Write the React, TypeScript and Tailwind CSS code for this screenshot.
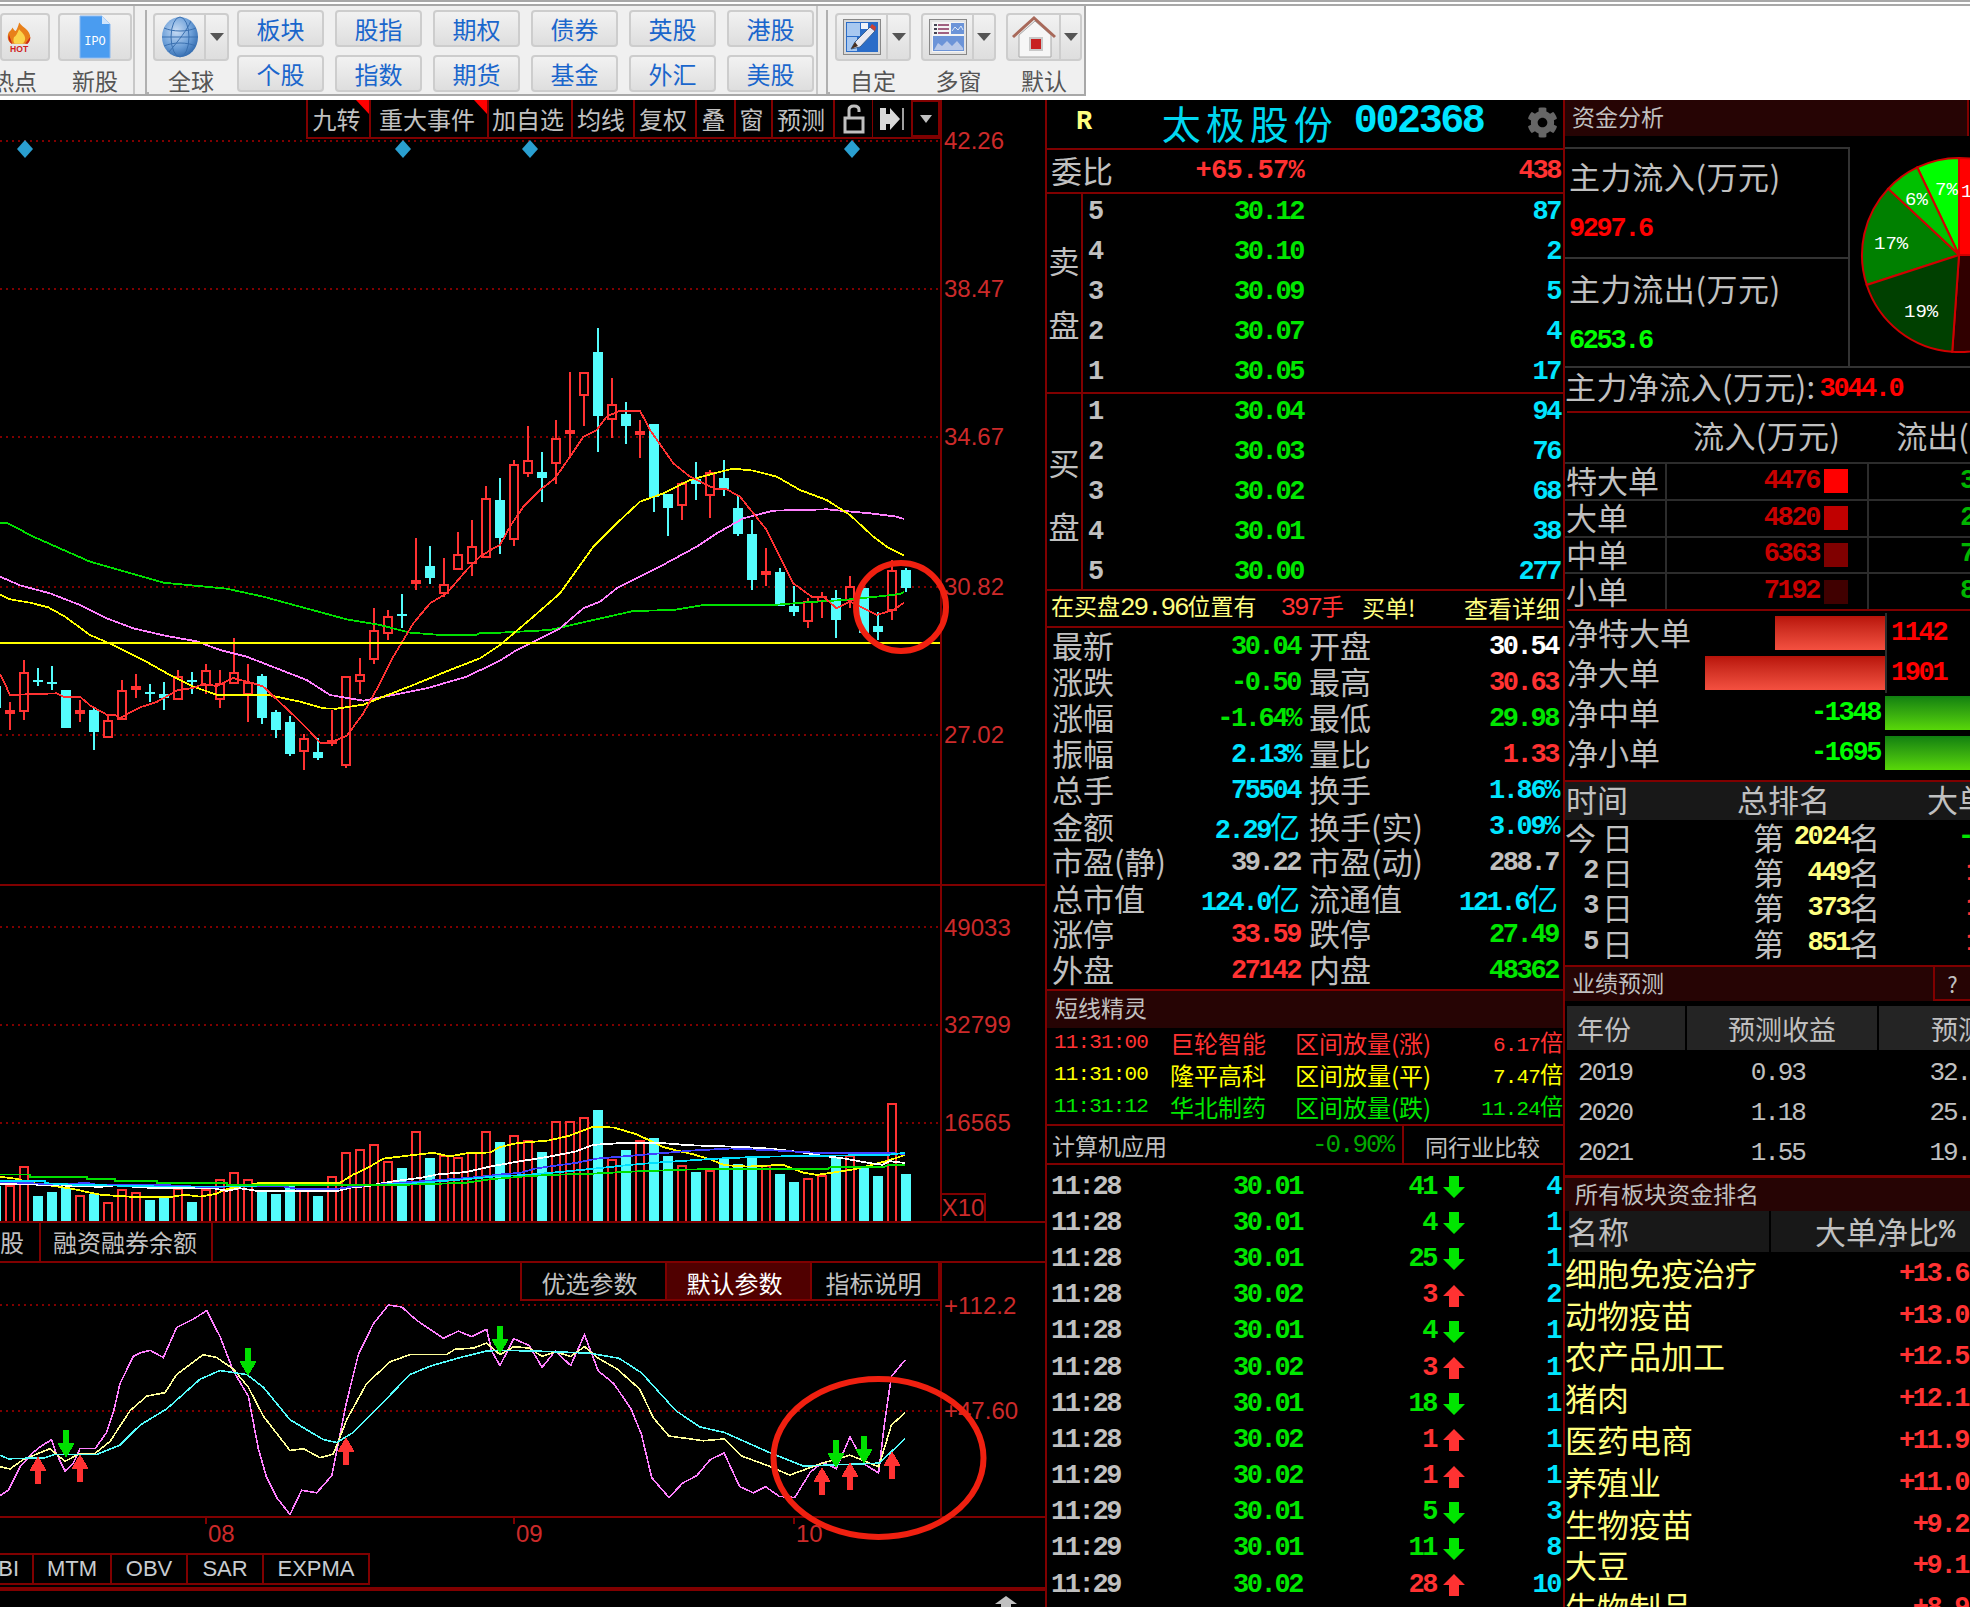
import React from 'react';
import { FaCog } from 'react-icons/fa';

const NUM = "[font-family:'Liberation_Mono','Noto_Sans_CJK_SC',monospace] font-bold text-[27px] tracking-[-2.4px] leading-none";
const THIN = "[font-family:'Liberation_Mono','Noto_Sans_CJK_SC',monospace] font-normal text-[26px] tracking-[-2.1px] leading-none";
const SMALL = "[font-family:'Liberation_Mono','Noto_Sans_CJK_SC',monospace] font-normal text-[21px] tracking-[-0.85px] leading-none";
const LABEL = "text-[31px] leading-none text-[#c0c0c0] whitespace-nowrap pb-[3px]";
const HEAD = "text-[23px] leading-none text-[#c0c0c0] whitespace-nowrap pb-[3px]";
const AXIS = "[font-family:'Liberation_Sans',sans-serif] text-[24px] leading-[24px] text-[#cc2a2a] whitespace-nowrap";

const G = 'text-[#00e600]';
const R = 'text-[#ff3232]';
const C = 'text-[#00e5ff]';
const W = 'text-[#c0c0c0]';
const Y = 'text-[#ffff80]';

type P = [number, number];
const z8 = (p: P[]) => p.map(([x, y]) => `${x / 3},${300 + y / 3}`).join(' ');
const z9 = (p: P[]) => p.map(([x, y]) => `${500 + x / 3},${300 + y / 3}`).join(' ');
const z10 = (p: P[]) => p.map(([x, y]) => `${x / 3},${1040 + y / 2.765}`).join(' ');
const z11 = (p: P[]) => p.map(([x, y]) => `${500 + x / 2.9},${1040 + y / 2.765}`).join(' ');

type Candle = ['r' | 'c', number, number, number, number];
const candles: Candle[] = [
  ['c', 1158, 1224, 1158, 1224], ['r', 1207, 1290, 1234, 1238], ['r', 1080, 1260, 1118, 1234], ['c', 1104, 1158, 1140, 1146],
  ['c', 1098, 1170, 1146, 1152], ['c', 1170, 1284, 1170, 1284], ['r', 1200, 1266, 1234, 1238], ['c', 1224, 1350, 1230, 1296],
  ['r', 1244, 1312, 1262, 1312], ['r', 1140, 1258, 1172, 1256], ['r', 1122, 1194, 1162, 1166], ['c', 1152, 1206, 1176, 1182],
  ['c', 1146, 1230, 1182, 1194], ['r', 1110, 1198, 1130, 1198], ['c', 1116, 1182, 1140, 1146], ['r', 1092, 1182, 1112, 1156],
  ['r', 1110, 1224, 1152, 1198], ['r', 1014, 1150, 1118, 1150], ['r', 1092, 1266, 1148, 1182], ['c', 1122, 1272, 1128, 1254],
  ['c', 1230, 1314, 1236, 1290], ['c', 1248, 1368, 1266, 1362], ['r', 1302, 1410, 1316, 1354], ['c', 1314, 1380, 1356, 1374],
  ['r', 1230, 1338, 1324, 1328], ['r', 1130, 1404, 1130, 1396], ['r', 1074, 1182, 1124, 1144], ['r', 924, 1092, 992, 1078],
  ['r', 930, 1020, 950, 1000], ['c', 882, 984, 942, 948], ['r', 714, 870, 842, 850], ['c', 738, 852, 798, 834],
  ['r', 774, 892, 854, 880], ['r', 696, 808, 764, 808], ['r', 660, 828, 740, 790], ['r', 558, 772, 596, 772],
  ['c', 534, 762, 600, 714], ['r', 480, 738, 494, 718], ['r', 378, 532, 482, 520], ['c', 456, 606, 516, 534],
  ['r', 360, 552, 416, 490], ['r', 216, 468, 392, 400], ['r', 218, 378, 218, 286], ['c', 84, 456, 156, 348],
  ['r', 234, 414, 314, 356], ['c', 306, 432, 342, 378], ['r', 360, 474, 397, 401], ['c', 372, 636, 372, 590],
  ['c', 582, 708, 582, 624], ['r', 546, 660, 552, 616], ['c', 486, 600, 536, 552], ['r', 510, 654, 518, 584],
  ['c', 480, 588, 534, 566], ['c', 588, 708, 624, 702], ['c', 660, 870, 702, 840], ['r', 744, 858, 817, 821],
  ['c', 804, 918, 816, 918], ['c', 858, 948, 918, 936], ['r', 894, 984, 906, 964], ['r', 876, 954, 890, 902],
  ['c', 870, 1014, 894, 960], ['r', 828, 924, 860, 900], ['c', 864, 1008, 864, 1000], ['c', 936, 1020, 978, 996],
  ['r', 780, 960, 812, 930], ['c', 804, 876, 810, 864],
];

const vols: ['r' | 'c', number][] = [
  ['c', 405], ['r', 405], ['r', 350], ['c', 431], ['c', 420], ['c', 408], ['r', 432], ['c', 426], ['r', 450], ['r', 416], ['r', 422], ['c', 442],
  ['c', 435], ['r', 412], ['c', 448], ['r', 415], ['r', 388], ['r', 367], ['r', 388], ['c', 415], ['c', 426], ['c', 393], ['r', 415], ['c', 431],
  ['r', 378], ['r', 312], ['r', 305], ['r', 289], ['r', 338], ['c', 354], ['r', 255], ['c', 326], ['r', 322], ['r', 327], ['r', 312], ['r', 255],
  ['c', 282], ['r', 266], ['r', 278], ['c', 310], ['r', 228], ['r', 228], ['r', 217], ['c', 194], ['r', 333], ['c', 304], ['r', 278], ['c', 271],
  ['c', 321], ['r', 349], ['c', 365], ['r', 361], ['c', 327], ['c', 344], ['c', 327], ['r', 349], ['c', 371], ['c', 393], ['r', 383], ['r', 376],
  ['c', 327], ['r', 321], ['c', 349], ['c', 376], ['r', 178], ['c', 371],
];

const ma5 = z8([[0, 1122], [30, 1184], [50, 1184], [170, 1180], [190, 1190], [240, 1190], [270, 1216], [320, 1244], [345, 1244], [360, 1254], [420, 1222], [470, 1206], [534, 1170], [580, 1164], [610, 1152], [650, 1158], [700, 1134], [760, 1150], [790, 1160], [830, 1198], [880, 1245], [930, 1295], [960, 1328], [990, 1328], [1040, 1308], [1090, 1240], [1140, 1150], [1180, 1070], [1240, 970], [1290, 910], [1340, 880], [1400, 810], [1440, 770], [1480, 745]]) + ' ' + z9([[0, 735], [30, 680], [70, 620], [120, 570], [165, 535], [210, 470], [250, 410], [290, 390], [320, 350], [360, 332], [420, 332], [450, 390], [520, 490], [570, 530], [610, 550], [650, 568], [680, 568], [720, 590], [760, 640], [800, 690], [850, 790], [880, 850], [935, 890], [970, 890], [1010, 925], [1050, 905], [1090, 925], [1130, 945], [1180, 930], [1212, 908]]);
const ma10 = z8([[0, 884], [30, 898], [90, 908], [145, 922], [195, 950], [270, 1005], [340, 1035], [430, 1080], [510, 1125], [580, 1160], [650, 1184], [800, 1184], [900, 1205], [970, 1225], [1010, 1226], [1090, 1214], [1150, 1190], [1240, 1155], [1350, 1110], [1440, 1075]]) + ' ' + z9([[0, 1035], [100, 950], [180, 880], [280, 740], [350, 670], [420, 605], [490, 580], [570, 540], [650, 518], [700, 506], [760, 512], [830, 530], [900, 570], [980, 600], [1050, 645], [1120, 710], [1160, 740], [1212, 766]]);
const ma20 = z8([[0, 830], [60, 856], [150, 880], [240, 915], [320, 955], [400, 985], [500, 1008], [590, 1024], [660, 1050], [740, 1070], [830, 1105], [920, 1140], [990, 1185], [1090, 1202], [1180, 1185], [1280, 1165], [1400, 1130]]) + ' ' + z9([[0, 1082], [50, 1050], [120, 1015], [180, 985], [250, 925], [300, 905], [350, 865], [470, 805], [590, 740], [650, 700], [730, 655], [820, 632], [980, 628], [1110, 640], [1190, 650], [1212, 657]]);
const ma60 = z8([[0, 668], [20, 668], [100, 710], [270, 785], [400, 822], [490, 848], [680, 866], [790, 890], [900, 920], [1040, 958], [1140, 975], [1230, 998], [1310, 1004], [1430, 1004], [1440, 998]]) + ' ' + z9([[0, 998], [150, 990], [280, 960], [400, 933], [520, 930], [610, 915], [820, 915], [905, 908], [1030, 900], [1130, 890], [1200, 882], [1212, 876]]);

const volLines: [string, string][] = [
  ['#ffff00', z10([[0, 378], [50, 384], [94, 395], [178, 406], [220, 412], [270, 422], [303, 428], [386, 433], [510, 434], [555, 428], [600, 433], [650, 425], [680, 412], [775, 396], [1020, 395], [1060, 372], [1100, 355], [1150, 328], [1240, 318], [1300, 312], [1350, 322], [1400, 313], [1470, 311]]) + ' ' + z11([[0, 296], [50, 285], [140, 278], [200, 265], [270, 240], [330, 242], [400, 262], [470, 295], [510, 305], [560, 316], [610, 330], [650, 346], [720, 350], [820, 345], [880, 367], [920, 373], [990, 363], [1030, 357], [1120, 335], [1175, 318]])],
  ['#ffffff', z10([[0, 398], [50, 398], [303, 406], [345, 402], [470, 410], [640, 410], [680, 417], [720, 410], [770, 417], [1015, 417], [1060, 406], [1100, 405], [1145, 396], [1185, 390], [1270, 380], [1310, 372], [1400, 365], [1470, 350]]) + ' ' + z11([[0, 345], [60, 335], [140, 323], [220, 308], [270, 290], [350, 285], [470, 285], [550, 291], [710, 296], [790, 301], [870, 310], [920, 318], [1000, 328], [1070, 340], [1110, 345], [1130, 335], [1175, 340]])],
  ['#4040ff', z10([[0, 392], [180, 400], [260, 395], [300, 402], [470, 400], [640, 408], [680, 405], [850, 405], [890, 411], [1015, 411], [1060, 405], [1270, 390], [1395, 382], [1440, 378]]) + ' ' + z11([[0, 372], [60, 367], [100, 356], [140, 350], [220, 340], [280, 328], [380, 320], [470, 313], [550, 306], [670, 300], [790, 305], [920, 312], [1120, 312], [1175, 315]])],
  ['#00e0ff', z10([[0, 390], [135, 390], [135, 396], [220, 400], [470, 405], [640, 405], [700, 405], [850, 400], [1015, 400], [1140, 400], [1230, 397], [1395, 385]]) + ' ' + z11([[0, 376], [60, 374], [140, 368], [260, 357], [380, 345], [470, 338], [550, 333], [630, 328], [750, 323], [920, 320], [1120, 318], [1175, 312]])],
  ['#00e000', z10([[0, 372], [90, 372], [90, 378], [260, 378], [260, 384], [345, 384], [345, 389], [470, 389], [470, 395], [680, 395], [680, 400], [850, 400], [1225, 400], [1395, 395], [1480, 384]]) + ' ' + z11([[0, 383], [60, 378], [140, 373], [260, 370], [380, 364], [550, 358], [790, 356], [950, 357], [960, 351], [1115, 351], [1125, 345], [1175, 345]])],
];

const kdjK = z10([[0, 1260], [25, 1245], [60, 1180], [100, 1140], [125, 1122], [155, 1105], [165, 1135], [195, 1192], [220, 1170], [240, 1130], [285, 1130], [320, 1085], [340, 1030], [360, 950], [400, 875], [420, 865], [450, 858], [490, 878], [530, 795], [580, 772], [620, 748], [660, 820], [700, 915], [745, 985], [775, 1130], [800, 1210], [830, 1265], [870, 1312], [905, 1245], [950, 1252], [995, 1205], [1020, 1090], [1040, 1000], [1075, 870], [1120, 785], [1165, 733], [1205, 738], [1250, 775], [1330, 825], [1375, 805], [1415, 820], [1460, 800], [1475, 860]]) + ' ' + z11([[0, 900], [40, 826], [85, 845], [122, 905], [160, 860], [205, 900], [245, 815], [285, 915], [330, 950], [380, 1020], [410, 1090], [440, 1210], [490, 1265], [530, 1225], [570, 1205], [610, 1160], [650, 1142], [695, 1235], [735, 1252], [770, 1235], [810, 1262], [855, 1265], [900, 1195], [935, 1168], [975, 1185], [1015, 1098], [1060, 1175], [1098, 1197], [1115, 1060], [1135, 930], [1175, 885]]);
const kdjD = z10([[0, 1180], [30, 1186], [70, 1160], [150, 1130], [195, 1165], [240, 1143], [285, 1143], [330, 1110], [390, 1025], [440, 985], [495, 975], [530, 925], [610, 870], [650, 878], [700, 910], [745, 960], [790, 1040], [870, 1135], [910, 1130], [960, 1155], [1000, 1145], [1040, 1050], [1100, 950], [1170, 890], [1230, 870], [1340, 870], [1365, 855], [1420, 852], [1460, 838]]) + ' ' + z11([[0, 870], [40, 848], [85, 852], [122, 875], [160, 862], [205, 875], [245, 848], [285, 880], [340, 910], [405, 965], [445, 1045], [490, 1095], [590, 1108], [650, 1103], [700, 1150], [780, 1178], [840, 1203], [935, 1170], [1015, 1148], [1060, 1165], [1098, 1180], [1135, 1065], [1175, 1030]]);
const kdjJ = z10([[0, 1148], [25, 1158], [135, 1155], [165, 1146], [290, 1146], [360, 1120], [420, 1065], [500, 1020], [600, 938], [660, 914], [740, 925], [790, 960], [870, 1050], [970, 1105], [1010, 1113], [1060, 1085], [1130, 1020], [1230, 925], [1290, 902], [1380, 878], [1460, 860]]) + ' ' + z11([[0, 858], [100, 860], [160, 862], [260, 866], [345, 880], [410, 920], [510, 1025], [580, 1070], [650, 1085], [780, 1140], [880, 1178], [1100, 1170], [1175, 1102]]);

function sector(cx: number, cy: number, r: number, a0: number, a1: number) {
  const pt = (a: number) => [cx + r * Math.sin((a * Math.PI) / 180), cy - r * Math.cos((a * Math.PI) / 180)];
  const [x0, y0] = pt(a0);
  const [x1, y1] = pt(a1);
  return `M${cx},${cy} L${x0},${y0} A${r},${r} 0 ${Math.abs(a1 - a0) > 180 ? 1 : 0} ${a1 > a0 ? 1 : 0} ${x1},${y1} Z`;
}

function UpArrow({ cx, top, h = 28, w = 18 }: { cx: number; top: number; h?: number; w?: number }) {
  const head = h * 0.55;
  const s = w * 0.37;
  return <polygon fill="#ff3232" shapeRendering="crispEdges" points={`${cx},${top} ${cx + w / 2},${top + head} ${cx + s / 2},${top + head} ${cx + s / 2},${top + h} ${cx - s / 2},${top + h} ${cx - s / 2},${top + head} ${cx - w / 2},${top + head}`} />;
}
function DownArrow({ cx, top, h = 28, w = 18 }: { cx: number; top: number; h?: number; w?: number }) {
  const b = top + h;
  const head = h * 0.55;
  const s = w * 0.37;
  return <polygon fill="#00e000" shapeRendering="crispEdges" points={`${cx},${b} ${cx + w / 2},${b - head} ${cx + s / 2},${b - head} ${cx + s / 2},${top} ${cx - s / 2},${top} ${cx - s / 2},${b - head} ${cx - w / 2},${b - head}`} />;
}

function Flame() {
  return (
    <svg width="42" height="38" viewBox="0 0 42 38">
      <path d="M20 2 C24 8 33 10 33 20 C33 24 31 26 29 27 L12 27 C8 25 6 22 7 16 C8 12 11 12 12 8 C14 11 15 12 16 12 C18 9 19 6 20 2 Z" fill="#e8801a" />
      <path d="M20 10 C23 14 27 16 27 21 C27 24 25 26 24 27 L15 27 C13 25 13 22 14 19 C16 19 18 14 20 10 Z" fill="#fbd34a" />
      <path d="M11 27 C8 24 7 20 8 16 L12 27 Z M30 27 C32 24 33 22 33 19 L27 27 Z" fill="#c8261a" />
      <text x="20" y="37" textAnchor="middle" fontFamily="Liberation Sans" fontWeight="700" fontSize="10" fill="#d02020">HOT</text>
    </svg>
  );
}
function Doc() {
  return (
    <svg width="34" height="44" viewBox="0 0 34 44">
      <path d="M2 1 H24 L32 9 V43 H2 Z" fill="#4a9cf0" stroke="#8ab8f0" />
      <path d="M24 1 V9 H32 Z" fill="#cfe4fb" />
      <text x="17" y="30" textAnchor="middle" fontFamily="Liberation Mono" fontSize="12" fill="#ffffff">IPO</text>
    </svg>
  );
}
function Globe() {
  return (
    <svg width="38" height="42" viewBox="0 0 38 42">
      <defs>
        <radialGradient id="gl" cx="40%" cy="35%" r="70%">
          <stop offset="0%" stopColor="#c8dcf4" />
          <stop offset="60%" stopColor="#6c9fd8" />
          <stop offset="100%" stopColor="#2f68ac" />
        </radialGradient>
      </defs>
      <ellipse cx="19" cy="21" rx="18" ry="20" fill="url(#gl)" />
      <g fill="none" stroke="#3a70b0" strokeWidth="1">
        <ellipse cx="19" cy="21" rx="9" ry="20" />
        <path d="M3 12 C12 16 26 16 35 12 M1 21 H37 M3 30 C12 26 26 26 35 30 M8 36 C18 24 26 14 30 5" />
      </g>
    </svg>
  );
}
function PencilIcon() {
  return (
    <svg width="38" height="36" viewBox="0 0 38 36">
      <rect x="0.5" y="0.5" width="37" height="35" fill="#d8d8d8" stroke="#888" />
      <rect x="3" y="3" width="32" height="30" fill="#2a6cc8" />
      <rect x="4" y="4" width="13" height="13" fill="#a8c8f0" />
      <rect x="18" y="4" width="7" height="6" fill="#f0f4fa" />
      <rect x="4" y="18" width="10" height="14" fill="#a8c8f0" />
      <path d="M8 30 L12 23 L27 8 L32 12 L17 28 Z" fill="#e8e8f0" stroke="#3a6090" />
      <path d="M27 8 L32 12 L33 8 L29 5 Z" fill="#d04030" />
      <path d="M8 30 L12 23 L15 27 Z" fill="#4a3020" />
    </svg>
  );
}
function WindowsIcon() {
  return (
    <svg width="38" height="36" viewBox="0 0 38 36">
      <rect x="0.5" y="0.5" width="37" height="35" fill="#e4e4e4" stroke="#888" />
      <rect x="3" y="3" width="32" height="30" fill="#f4f4f4" />
      <rect x="22" y="4" width="13" height="11" fill="#6c94d8" />
      <path d="M23 12 L26 8 L29 11 L32 7 L34 11" stroke="#dfe9f8" fill="none" />
      <g fill="#445">
        <rect x="5" y="5" width="3" height="2" />
        <rect x="5" y="9" width="3" height="2" />
        <rect x="5" y="13" width="3" height="2" />
      </g>
      <g fill="#a06080">
        <rect x="9" y="5" width="11" height="2" />
        <rect x="9" y="9" width="11" height="2" />
        <rect x="9" y="13" width="11" height="2" />
      </g>
      <rect x="4" y="17" width="31" height="15" fill="#6c94d8" />
      <path d="M5 31 L9 24 L13 27 L18 22 L23 27 L28 22 L34 29 V31 Z" fill="#b8c8e8" />
    </svg>
  );
}
function HouseIcon() {
  return (
    <svg width="46" height="44" viewBox="0 0 46 44">
      <path d="M8 20 V42 H40 V20 L24 6 Z" fill="#f6f6f6" stroke="#a8a8a8" />
      <path d="M2 22 L23 3 L44 22" fill="none" stroke="#a8695a" strokeWidth="3" />
      <rect x="18" y="22" width="14" height="14" fill="#c8c8c8" />
      <rect x="20" y="24" width="10" height="10" fill="#c82020" />
    </svg>
  );
}

function Caret({ className = '' }: { className?: string }) {
  return (
    <svg width="14" height="8" viewBox="0 0 14 8" className={className}>
      <path d="M0 0 H14 L7 8 Z" fill="#555" />
    </svg>
  );
}

const BTN = 'rounded-[4px] border-2 border-[#cdcdcd] bg-gradient-to-b from-[#f2f2f2] to-[#dedede]';

function SplitButton({ w, split, icon, label }: { w: string; split: string; icon: React.ReactNode; label: string }) {
  return (
    <div className={`flex flex-col items-center ${w}`}>
      <div className={`flex h-[48px] w-full ${BTN}`}>
        <div className={`flex items-center justify-center border-r-2 border-[#cdcdcd] ${split}`}>{icon}</div>
        <div className="flex flex-1 items-center justify-center">
          <Caret />
        </div>
      </div>
      <div className="mt-[7px] text-[23px] leading-[24px] text-[#555]">{label}</div>
    </div>
  );
}

function Grip() {
  return <div className="mt-[4px] h-[84px] w-[4px] border-b-2 border-l-2 border-[#b0b0b0]" />;
}

function Toolbar() {
  const names = ['板块', '股指', '期权', '债券', '英股', '港股', '个股', '指数', '期货', '基金', '外汇', '美股'];
  return (
    <div className="h-[100px] w-full shrink-0 bg-white">
      <div className="h-[2px] bg-[#a8a8a8]" />
      <div className="h-[2px]" />
      <div className="h-[2px] bg-[#a8a8a8]" />
      <div className="flex h-[90px] w-[1086px] border-b-2 border-r-2 border-[#a8a8a8] bg-[#f0f0f0]">
        <div className="flex h-full w-[135px] shrink-0 gap-[8px] border-r-2 border-[#c8c8c8] pt-[7px]">
          <div className="flex w-[50px] flex-col items-end">
            <div className={`flex h-[48px] w-full items-center justify-end overflow-hidden pr-[10px] ${BTN}`}>
              <Flame />
            </div>
            <div className="mr-[13px] mt-[7px] whitespace-nowrap text-[23px] leading-[24px] text-[#555]">热点</div>
          </div>
          <div className="flex w-[74px] flex-col items-center">
            <div className={`flex h-[48px] w-full items-center justify-center ${BTN}`}>
              <Doc />
            </div>
            <div className="mt-[7px] text-[23px] leading-[24px] text-[#555]">新股</div>
          </div>
        </div>
        <div className="flex h-full w-[683px] shrink-0 border-r-2 border-[#c8c8c8] pl-[10px]">
          <Grip />
          <div className="ml-[4px] pt-[7px]">
            <SplitButton w="w-[76px]" split="w-[51px]" icon={<Globe />} label="全球" />
          </div>
          <div className="ml-[8px] mt-[4px] grid grid-cols-[repeat(6,87px)] grid-rows-[37px_37px] gap-x-[11px] gap-y-[8px]">
            {names.map((n) => (
              <div key={n} className={`flex items-center justify-center text-[24px] leading-none text-[#1a66cc] ${BTN}`}>
                {n}
              </div>
            ))}
          </div>
        </div>
        <div className="flex h-full flex-1 pl-[8px]">
          <Grip />
          <div className="ml-[5px] flex gap-[10px] pt-[7px]">
            <SplitButton w="w-[76px]" split="w-[51px]" icon={<PencilIcon />} label="自定" />
            <SplitButton w="w-[75px]" split="w-[51px]" icon={<WindowsIcon />} label="多窗" />
            <SplitButton w="w-[76px]" split="w-[53px]" icon={<HouseIcon />} label="默认" />
          </div>
        </div>
      </div>
    </div>
  );
}

function MenuBar() {
  const cells: [string, string, boolean][] = [
    ['九转', 'w-[63px]', true],
    ['重大事件', 'w-[118px]', true],
    ['加自选', 'w-[84px]', false],
    ['均线', 'w-[62px]', false],
    ['复权', 'w-[62px]', false],
    ['叠', 'w-[39px]', false],
    ['窗', 'w-[37px]', false],
    ['预测', 'w-[62px]', false],
  ];
  return (
    <div className="absolute right-0 top-0 flex h-[39px] border-b-2 border-l-2 border-[#800000] bg-black">
      {cells.map(([t, w, tri]) => (
        <div key={t} className={`relative flex items-center justify-center border-r-2 border-[#800000] pr-[4px] text-[24px] leading-none text-[#c0c0c0] ${w}`}>
          {t}
          {tri && (
            <svg width="13" height="14" viewBox="0 0 13 14" className="absolute right-0 top-0">
              <path d="M0 0 H13 V14 Z" fill="#ff0000" />
            </svg>
          )}
        </div>
      ))}
      <div className="flex w-[38px] items-center justify-center border-r border-[#800000]">
        <svg width="22" height="30" viewBox="0 0 22 30" fill="none" stroke="#c0c0c0" strokeWidth="3">
          <rect x="2" y="14" width="18" height="14" />
          <path d="M6 14 V6 Q6 2 11 2 Q16 2 16 6 V8" />
        </svg>
      </div>
      <div className="flex w-[38px] items-center justify-center">
        <svg width="24" height="26" viewBox="0 0 24 26" fill="#d8d8d8">
          <rect x="0" y="2" width="6" height="22" />
          <path d="M6 8 H10 V2 L20 13 L10 24 V18 H6 Z" />
          <rect x="22" y="2" width="2" height="22" fill="#a0a0a0" />
        </svg>
      </div>
      <div className="flex w-[29px] items-center justify-center border-2 border-[#800000]">
        <svg width="12" height="8" viewBox="0 0 12 8">
          <path d="M0 0 H12 L6 8 Z" fill="#c0c0c0" />
        </svg>
      </div>
    </div>
  );
}

function MainPlot() {
  return (
    <svg width="940" height="784" viewBox="0 100 940 784" className="block">
      <g stroke="#800000" strokeWidth="2" strokeDasharray="2 4" shapeRendering="crispEdges">
        <line x1="0" x2="940" y1="141" y2="141" />
        <line x1="0" x2="940" y1="289" y2="289" />
        <line x1="0" x2="940" y1="437" y2="437" />
        <line x1="0" x2="940" y1="587" y2="587" />
        <line x1="0" x2="940" y1="735" y2="735" />
      </g>
      {[25, 403, 530, 852].map((x) => (
        <polygon key={x} points={`${x},140 ${x + 8},149 ${x},158 ${x - 8},149`} fill="#2a9fd0" />
      ))}
      <g shapeRendering="crispEdges">
        {candles.map(([t, wt, wb, bt, bb], i) => {
          const x = -4 + 14 * i;
          const yy = (v: number) => 300 + v / 3;
          const col = t === 'r' ? '#ff3232' : '#54fcfc';
          return (
            <g key={i}>
              <rect x={x - 1} y={yy(wt)} width="2" height={yy(wb) - yy(wt)} fill={col} />
              {t === 'r' ? (
                <rect x={x - 4} y={yy(bt)} width="8" height={Math.max(yy(bb) - yy(bt), 1)} fill="#000" stroke={col} strokeWidth="2" />
              ) : (
                <rect x={x - 5} y={yy(bt)} width="10" height={Math.max(yy(bb) - yy(bt), 2)} fill={col} />
              )}
            </g>
          );
        })}
      </g>
      <g fill="none" strokeWidth="1.8" shapeRendering="crispEdges">
        <polyline points={ma60} stroke="#00e000" />
        <polyline points={ma20} stroke="#ff80ff" />
        <polyline points={ma10} stroke="#ffff00" />
        <polyline points={ma5} stroke="#ff3232" />
        <line x1="0" x2="940" y1="643" y2="643" stroke="#ffff00" strokeWidth="2" />
      </g>
    </svg>
  );
}

function VolumePlot() {
  return (
    <svg width="940" height="335" viewBox="0 886 940 335" className="block">
      <g stroke="#800000" strokeWidth="2" strokeDasharray="2 4" shapeRendering="crispEdges">
        <line x1="0" x2="940" y1="927" y2="927" />
        <line x1="0" x2="940" y1="1025" y2="1025" />
        <line x1="0" x2="940" y1="1123" y2="1123" />
      </g>
      <g shapeRendering="crispEdges">
        {vols.map(([t, v], i) => {
          const x = -4 + 14 * i;
          const y = 1040 + v / 2.765;
          return t === 'r' ? (
            <rect key={i} x={x - 4} y={y} width="8" height={1222 - y} fill="#000" stroke="#ff3232" strokeWidth="2" />
          ) : (
            <rect key={i} x={x - 5} y={y} width="10" height={1222 - y} fill="#54fcfc" />
          );
        })}
      </g>
      <g fill="none" strokeWidth="1.8" shapeRendering="crispEdges">
        {volLines.map(([c, p]) => (
          <polyline key={c} points={p} stroke={c} />
        ))}
      </g>
    </svg>
  );
}

function KdjPlot() {
  return (
    <svg width="940" height="253" viewBox="0 1263 940 253" className="block">
      <g stroke="#800000" strokeWidth="2" strokeDasharray="2 4" shapeRendering="crispEdges">
        <line x1="0" x2="940" y1="1305" y2="1305" />
        <line x1="0" x2="940" y1="1411" y2="1411" />
      </g>
      <g fill="none" strokeWidth="1.6" shapeRendering="crispEdges">
        <polyline points={kdjK} stroke="#ff80ff" />
        <polyline points={kdjD} stroke="#ffff99" />
        <polyline points={kdjJ} stroke="#54fcfc" />
      </g>
      <UpArrow cx={38} top={1456} />
      <UpArrow cx={80} top={1454} />
      <UpArrow cx={346} top={1437} />
      <UpArrow cx={822} top={1467} />
      <UpArrow cx={850} top={1462} />
      <UpArrow cx={892} top={1451} />
      <DownArrow cx={66} top={1430} />
      <DownArrow cx={248} top={1348} />
      <DownArrow cx={500} top={1326} />
      <DownArrow cx={836} top={1440} />
      <DownArrow cx={864} top={1436} />
    </svg>
  );
}

function ChartColumn() {
  const smallTabs: [string, string][] = [
    ['优选参数', 'w-[145px] pr-[8px] text-[#c0c0c0]'],
    ['默认参数', 'w-[145px] pr-[8px] bg-[#500000] text-white'],
    ['指标说明', 'flex-1 pr-[3px] text-[#c0c0c0]'],
  ];
  const indTabs: [string, string][] = [
    ['BI', 'w-[34px] justify-end pr-[13px] overflow-hidden'],
    ['MTM', 'w-[78px] justify-center'],
    ['OBV', 'w-[76px] justify-center'],
    ['SAR', 'w-[76px] justify-center'],
    ['EXPMA', 'w-[106px] justify-center'],
  ];
  const mainAxis: [string, string][] = [
    ['42.26', 'h-[148px]'],
    ['38.47', 'h-[148px]'],
    ['34.67', 'h-[150px]'],
    ['30.82', 'h-[148px]'],
    ['27.02', 'h-[148px]'],
  ];
  return (
    <div className="relative flex h-full w-[1047px] shrink-0 flex-col border-r-2 border-[#800000]">
      <div className="flex h-[786px] border-b-2 border-[#800000]">
        <div className="relative w-[940px] shrink-0">
          <MainPlot />
          <MenuBar />
        </div>
        <div className={`flex-1 border-l-2 border-[#800000] pl-[2px] pt-[29px] ${AXIS}`}>
          {mainAxis.map(([t, h]) => (
            <div key={t} className={h}>
              {t}
            </div>
          ))}
        </div>
      </div>
      <div className="flex h-[337px] border-b-2 border-[#800000]">
        <div className="w-[940px] shrink-0">
          <VolumePlot />
        </div>
        <div className={`flex flex-1 flex-col border-l-2 border-[#800000] pl-[2px] pt-[30px] ${AXIS}`}>
          {['49033', '32799', '16565'].map((t) => (
            <div key={t} className="h-[98px]">
              {t}
            </div>
          ))}
          <div className="-ml-[2px] mt-[-15px] flex h-[28px] w-[44px] items-center justify-center border-r-2 border-t-2 border-[#800000] bg-black">X10</div>
        </div>
      </div>
      <div className="flex h-[40px] border-b-2 border-[#800000]">
        <div className="flex w-[41px] items-center justify-end border-r-2 border-[#800000] pr-[15px] text-[24px] leading-none text-[#c0c0c0]">股</div>
        <div className="flex w-[172px] items-center justify-center border-r-2 border-[#800000] pr-[2px] text-[24px] leading-none text-[#c0c0c0]">融资融券余额</div>
      </div>
      <div className="flex h-[255px] border-b-2 border-[#800000]">
        <div className="relative w-[940px] shrink-0">
          <KdjPlot />
          <div className="absolute right-0 top-0 flex h-[38px] w-[420px] border-b-2 border-l-2 border-[#800000] bg-black">
            {smallTabs.map(([t, c]) => (
              <div key={t} className={`flex items-center justify-center border-r-2 border-[#800000] pt-[3px] text-[24px] leading-none ${c}`}>
                {t}
              </div>
            ))}
          </div>
        </div>
        <div className={`flex-1 border-l-2 border-[#800000] pl-[2px] pt-[31px] ${AXIS}`}>
          <div className="h-[105px]">+112.2</div>
          <div>+47.60</div>
        </div>
      </div>
      <div className={`relative h-[35px] ${AXIS}`}>
        {[[205, '08'], [513, '09'], [793, '10']].map(([x, t]) => (
          <div key={t as string} className="absolute top-0 flex items-start" style={{ left: x as number }}>
            <div className="h-[6px] w-[2px] bg-[#800000]" />
            <div className="ml-[1px] mt-[4px]">{t}</div>
          </div>
        ))}
      </div>
      <div className="flex h-[32px]">
        {indTabs.map(([t, c]) => (
          <div key={t} className={`flex items-center border-b-2 border-r-2 border-t-2 border-[#800000] [font-family:'Liberation_Sans',sans-serif] text-[22px] leading-none text-[#c8ccd0] ${c}`}>
            {t}
          </div>
        ))}
      </div>
      <div className="mt-[2px] h-[4px] bg-[#800000]" />
      <div className="relative flex-1">
        <svg width="22" height="12" viewBox="0 0 22 12" className="absolute left-[995px] top-[5px]">
          <path d="M11 0 L22 8 H16 V12 H6 V8 H0 Z" fill="#c0c0c0" />
        </svg>
      </div>
      <svg className="pointer-events-none absolute inset-0" width="1047" height="1507" viewBox="0 100 1047 1507">
        <ellipse cx="901" cy="607" rx="45" ry="44" fill="none" stroke="#f02010" strokeWidth="6" />
        <ellipse cx="878.5" cy="1458" rx="105" ry="79" fill="none" stroke="#f02010" strokeWidth="6" />
      </svg>
    </div>
  );
}

function Depth({ side, rows, sideClass }: { side: [string, string]; rows: [string, string, string][]; sideClass: string }) {
  return (
    <div className="flex h-full border-t-2 border-[#800000]">
      <div className={`flex w-[36px] shrink-0 flex-col items-center justify-center gap-[30px] border-r-2 border-[#800000] ${sideClass}`}>
        <span className={LABEL}>{side[0]}</span>
        <span className={LABEL}>{side[1]}</span>
      </div>
      <div className="-mt-[1px] flex flex-1 flex-col">
        {rows.map(([n, p, v]) => (
          <div key={n} className={`flex h-[39.8px] shrink-0 items-center ${NUM}`}>
            <span className={`w-[35px] pl-[5px] ${W}`}>{n}</span>
            <span className={`w-[185px] text-right ${G}`}>{p}</span>
            <span className={`flex-1 pr-[3px] text-right ${C}`}>{v}</span>
          </div>
        ))}
      </div>
    </div>
  );
}

function Num({ c, t, unit }: { c: string; t: string; unit?: string }) {
  return (
    <span className={`whitespace-nowrap pt-[2px] ${NUM} ${c}`}>
      {t}
      {unit && <span className="[font-family:'Noto_Sans_CJK_SC',sans-serif] text-[30px] font-normal tracking-normal">{unit}</span>}
    </span>
  );
}

function TickArrow({ up }: { up: boolean }) {
  return (
    <svg width="22" height="22" viewBox="0 0 22 22" className="ml-[7px] shrink-0">
      {up ? <path d="M11 0 L22 11 H16 V22 H6 V11 H0 Z" fill="#ff3232" /> : <path d="M11 22 L22 11 H16 V0 H6 V11 H0 Z" fill="#00e600" />}
    </svg>
  );
}

function QuotePanel() {
  const stats: [string, string, string, string, string, string][] = [
    ['最新', '30.04', G, '开盘', '30.54', 'text-white'],
    ['涨跌', '-0.50', G, '最高', '30.63', R],
    ['涨幅', '-1.64%', G, '最低', '29.98', G],
    ['振幅', '2.13%', C, '量比', '1.33', R],
    ['总手', '75504', C, '换手', '1.86%', C],
    ['金额', '2.29', C, '换手(实)', '3.09%', C],
    ['市盈(静)', '39.22', W, '市盈(动)', '288.7', W],
    ['总市值', '124.0', C, '流通值', '121.6', C],
    ['涨停', '33.59', R, '跌停', '27.49', G],
    ['外盘', '27142', R, '内盘', '48362', G],
  ];
  const sprite: [string, string, string, string, string][] = [
    ['11:31:00', '巨轮智能', '区间放量(涨)', '6.17倍', 'text-[#ff3232]'],
    ['11:31:00', '隆平高科', '区间放量(平)', '7.47倍', 'text-[#ffff00]'],
    ['11:31:12', '华北制药', '区间放量(跌)', '11.24倍', 'text-[#00e600]'],
  ];
  const ticks: [string, string, string, boolean, string][] = [
    ['11:28', '30.01', '41', false, '4'],
    ['11:28', '30.01', '4', false, '1'],
    ['11:28', '30.01', '25', false, '1'],
    ['11:28', '30.02', '3', true, '2'],
    ['11:28', '30.01', '4', false, '1'],
    ['11:28', '30.02', '3', true, '1'],
    ['11:28', '30.01', '18', false, '1'],
    ['11:28', '30.02', '1', true, '1'],
    ['11:29', '30.02', '1', true, '1'],
    ['11:29', '30.01', '5', false, '3'],
    ['11:29', '30.01', '11', false, '8'],
    ['11:29', '30.02', '28', true, '10'],
  ];
  return (
    <div className="flex h-full w-[518px] shrink-0 flex-col border-r-2 border-[#800000]">
      <div className="relative flex h-[48px] shrink-0 items-center pb-[4px]">
        <span className={`ml-[29px] text-[#ffff80] ${NUM}`}>R</span>
        <span className="ml-[72px] whitespace-nowrap text-[39px] leading-none tracking-[5px] text-[#00d8f0]">太极股份</span>
        <span className="ml-[16px] [font-family:'Liberation_Mono',monospace] text-[40px] font-bold leading-none tracking-[-2.4px] text-[#00e5ff]">002368</span>
        <FaCog className="ml-[44px] text-[#666]" size={31} />
      </div>
      <div className="flex h-[44px] shrink-0 items-center border-t-2 border-[#800000] pl-[4px]">
        <span className={LABEL}>委比</span>
        <span className={`w-[191px] text-right [font-family:'Liberation_Mono',monospace] text-[27px] font-bold leading-none tracking-[-0.7px] ${R}`}>+65.57%</span>
        <span className={`flex-1 pr-[3px] text-right ${NUM} ${R}`}>438</span>
      </div>
      <div className="h-[200px] shrink-0">
        <Depth
          sideClass=""
          side={['卖', '盘']}
          rows={[
            ['5', '30.12', '87'],
            ['4', '30.10', '2'],
            ['3', '30.09', '5'],
            ['2', '30.07', '4'],
            ['1', '30.05', '17'],
          ]}
        />
      </div>
      <div className="h-[197px] shrink-0">
        <Depth
          sideClass="pt-[6px]"
          side={['买', '盘']}
          rows={[
            ['1', '30.04', '94'],
            ['2', '30.03', '76'],
            ['3', '30.02', '68'],
            ['4', '30.01', '38'],
            ['5', '30.00', '277'],
          ]}
        />
      </div>
      <div className="flex h-[37px] shrink-0 items-center border-t-2 border-[#800000] bg-black pb-[2px] pl-[4px] text-[23px] leading-none text-[#ffff80]">
        <span className="whitespace-nowrap">
          在买盘<span className={THIN}>29.96</span>位置有
        </span>
        <span className="ml-[24px] whitespace-nowrap text-[#ff3232]">
          <span className={THIN}>397</span>手
        </span>
        <span className="ml-[18px] whitespace-nowrap">买单!</span>
        <span className="ml-auto mr-[3px] whitespace-nowrap text-[24px]">查看详细</span>
      </div>
      <div className="flex h-[363px] shrink-0 flex-col border-t-2 border-[#800000]">
        {stats.map(([a, v, c, b, v2, c2]) => (
          <div key={a} className="grid h-[36px] shrink-0 grid-cols-[248px_1fr] items-center px-[5px]">
            <div className="flex items-center justify-between">
              <span className={LABEL}>{a}</span>
              <Num c={c} t={v} unit={a === '金额' || a === '总市值' ? '亿' : undefined} />
            </div>
            <div className="ml-[9px] flex items-center justify-between">
              <span className={LABEL}>{b}</span>
              <Num c={c2} t={v2} unit={a === '总市值' ? '亿' : undefined} />
            </div>
          </div>
        ))}
      </div>
      <div className="flex h-[39px] shrink-0 items-center border-t-2 border-[#800000] bg-[#260404] pb-[2px] pl-[8px]">
        <span className={HEAD}>短线精灵</span>
      </div>
      <div className="flex h-[96px] shrink-0 flex-col">
        {sprite.map(([t, n, k, v, c]) => (
          <div key={k} className={`flex h-[32px] items-center pb-[3px] ${c}`}>
            <span className={`ml-[7px] w-[116px] ${SMALL}`}>{t}</span>
            <span className="w-[125px] whitespace-nowrap text-[24px] leading-none">{n}</span>
            <span className="whitespace-nowrap text-[24px] leading-none">{k}</span>
            <span className="ml-auto whitespace-nowrap text-[23px] leading-none">
              <span className={SMALL}>{v.slice(0, -1)}</span>倍
            </span>
          </div>
        ))}
      </div>
      <div className="flex h-[41px] shrink-0 border-y-2 border-[#800000]">
        <div className="flex w-[357px] items-center justify-between border-r-2 border-[#800000] pl-[5px] pr-[9px]">
          <span className={`mt-[5px] ${HEAD}`}>计算机应用</span>
          <span className={`${THIN} text-[#00a800]`}>-0.90%</span>
        </div>
        <div className="flex flex-1 items-center pl-[21px]">
          <span className={`mt-[6px] ${HEAD}`}>同行业比较</span>
        </div>
      </div>
      <div className="flex flex-col pt-[4px]">
        {ticks.map(([t, p, v, up, last], i) => (
          <div key={i} className={`flex h-[36.2px] shrink-0 items-center ${NUM}`}>
            <span className={`w-[75px] pl-[4px] ${W}`}>{t}</span>
            <span className={`w-[180px] text-right ${G}`}>{p}</span>
            <span className={`w-[134px] text-right ${up ? R : G}`}>{v}</span>
            <TickArrow up={up} />
            <span className={`flex-1 pr-[3px] text-right ${C}`}>{last}</span>
          </div>
        ))}
      </div>
    </div>
  );
}

function Pie() {
  const cx = 1959;
  const cy = 255;
  const r = 97;
  const slices: [number, number, string][] = [
    [-25.5, 0, '#00ff00'],
    [-47, -25.5, '#00c000'],
    [-108, -47, '#008000'],
    [-176, -108, '#004000'],
  ];
  return (
    <svg width="120" height="230" viewBox="1850 136 120 230" className="block shrink-0">
      <path d={sector(cx, cy, r, 0, 90)} fill="#ff0000" stroke="#d00000" strokeWidth="2" />
      <path d={sector(cx, cy, r, 90, 184)} fill="#300000" stroke="#d00000" strokeWidth="2" />
      {slices.map(([a, b, c]) => (
        <path key={c} d={sector(cx, cy, r, b, a)} fill={c} stroke="#d00000" strokeWidth="2" />
      ))}
      <g fill="#ffffff" fontFamily="Liberation Mono" fontSize="19">
        <text x="1935" y="195">7%</text>
        <text x="1905" y="205">6%</text>
        <text x="1874" y="249">17%</text>
        <text x="1904" y="317">19%</text>
        <text x="1961" y="197">1</text>
      </g>
    </svg>
  );
}

function RightPanel() {
  const orders: [string, string, string, string][] = [
    ['特大单', '4476', 'bg-[#ff0000]', '3'],
    ['大单', '4820', 'bg-[#c00000]', '2'],
    ['中单', '6363', 'bg-[#800000]', '7'],
    ['小单', '7192', 'bg-[#400000]', '8'],
  ];
  const ranks: [string, string][] = [
    ['今', '2024'],
    ['2', '449'],
    ['3', '373'],
    ['5', '851'],
  ];
  const yearRows: [string, string, string][] = [
    ['2019', '0.93', '32.'],
    ['2020', '1.18', '25.'],
    ['2021', '1.55', '19.'],
  ];
  const sectors: [string, string][] = [
    ['细胞免疫治疗', '+13.6'],
    ['动物疫苗', '+13.0'],
    ['农产品加工', '+12.5'],
    ['猪肉', '+12.1'],
    ['医药电商', '+11.9'],
    ['养殖业', '+11.0'],
    ['生物疫苗', '+9.2'],
    ['大豆', '+9.1'],
    ['生物制品', '+8.9'],
  ];
  return (
    <div className="flex h-full flex-1 flex-col overflow-hidden">
      <div className="mr-[1px] flex h-[36px] shrink-0 items-center border-r-2 border-[#800000] bg-[#260404] pl-[7px]">
        <span className={HEAD}>资金分析</span>
      </div>
      <div className="flex h-[230px] shrink-0">
        <div className="mt-[11px] flex h-[219px] w-[285px] shrink-0 flex-col border-r-2 border-t-2 border-[#333]">
          <div className="flex h-[110px] flex-col gap-[22px] border-b-2 border-[#333] pl-[4px] pt-[11px]">
            <span className={`tracking-[0.6px] ${LABEL}`}>主力流入(万元)</span>
            <span className={`${NUM} text-[#ff0000]`}>9297.6</span>
          </div>
          <div className="flex flex-col gap-[22px] pl-[4px] pt-[13px]">
            <span className={`tracking-[0.6px] ${LABEL}`}>主力流出(万元)</span>
            <span className={`${NUM} text-[#00ff00]`}>6253.6</span>
          </div>
        </div>
        <Pie />
      </div>
      <div className="flex h-[45px] shrink-0 items-center border-t-2 border-[#333]">
        <span className={`mb-[5px] tracking-[0.4px] ${LABEL}`}>主力净流入(万元):</span>
        <span className={`ml-[4px] ${NUM} text-[#ff0000]`}>3044.0</span>
      </div>
      <div className="ml-[2px] flex h-[51px] shrink-0 items-center border-t-2 border-[#800000] pl-[126px]">
        <span className={`mb-[4px] tracking-[0.4px] ${LABEL}`}>流入(万元)</span>
        <span className={`mb-[4px] ml-[56px] ${LABEL}`}>流出(</span>
      </div>
      <div className="flex h-[147px] shrink-0 flex-col">
        {orders.map(([n, v, sq, o]) => (
          <div key={n} className="flex flex-1 border-t-2 border-[#2c2c2c]">
            <div className="flex w-[102px] shrink-0 items-center border-r-2 border-[#2c2c2c] pl-[1px]">
              <span className={LABEL}>{n}</span>
            </div>
            <div className="flex w-[202px] shrink-0 items-center justify-end border-r-2 border-[#2c2c2c] pr-[19px]">
              <span className={`${NUM} text-[#c80000]`}>{v}</span>
              <span className={`ml-[5px] h-[24px] w-[24px] ${sq}`} />
            </div>
            <div className={`flex shrink-0 items-center pl-[91px] ${NUM} text-[#00b400]`}>{o}</div>
          </div>
        ))}
      </div>
      <div className="ml-[2px] flex h-[171px] shrink-0 flex-col border-t-2 border-[#800000] pt-[2px]">
        {[
          ['净特大单', 'w-[110px]', '1142', true],
          ['净大单', 'w-[180px]', '1901', true],
          ['净中单', '', '-1348', false],
          ['净小单', '', '-1695', false],
        ].map(([n, w, v, pos]) => (
          <div key={n as string} className="flex h-[40px] shrink-0">
            <div className="flex w-[318px] shrink-0 items-center">
              <span className={LABEL}>{n}</span>
              {pos ? (
                <span className={`ml-auto h-[34px] bg-gradient-to-b from-[#b81208] to-[#f45040] ${w}`} />
              ) : (
                <span className={`ml-auto pr-[5px] ${NUM} text-[#00ff00]`}>{v}</span>
              )}
            </div>
            {pos ? (
              <div className={`flex flex-1 items-center border-l-2 border-[#2c2c2c] pl-[4px] ${NUM} text-[#ff0000]`}>{v}</div>
            ) : (
              <div className="my-[3px] flex-1 bg-gradient-to-b from-[#108010] to-[#58d808]" />
            )}
          </div>
        ))}
      </div>
      <div className="flex h-[40px] shrink-0 items-center border-t-2 border-[#800000] bg-[#181818]">
        <span className={`mb-[2px] ml-[1px] ${LABEL}`}>时间</span>
        <span className={`mb-[2px] ml-[109px] ${LABEL}`}>总排名</span>
        <span className={`mb-[2px] ml-[97px] ${LABEL}`}>大单</span>
      </div>
      <div className="flex h-[145px] shrink-0 flex-col">
        {ranks.map(([d, v]) => (
          <div key={d} className="flex h-[35.4px] shrink-0 items-center">
            <span className={`flex w-[68px] shrink-0 items-center justify-end ${LABEL}`}>
              {d === '今' ? d : <span className={`mr-[5px] ${NUM} ${W}`}>{d}</span>}
              <span className={d === '今' ? 'ml-[6px]' : ''}>日</span>
            </span>
            <span className={`ml-[120px] ${LABEL}`}>第</span>
            <span className={`w-[65px] shrink-0 text-right ${NUM} ${Y}`}>{v}</span>
            <span className={LABEL}>名</span>
            {d === '今' ? <span className={`ml-[78px] ${NUM} ${G}`}>-1</span> : <span className={`ml-[86px] ${NUM} ${R}`}>1</span>}
          </div>
        ))}
      </div>
      <div className="flex h-[36px] shrink-0 items-center border-t-2 border-[#800000] bg-[#260404] pl-[7px]">
        <span className={HEAD}>业绩预测</span>
        <span className="ml-auto flex h-full w-[37px] items-center justify-center border-b-2 border-l-2 border-[#800000] text-[22px] leading-none text-[#c0c0c0]">?</span>
      </div>
      <div className="mt-[5px] flex h-[44px] shrink-0 gap-[2px] pl-[2px]">
        <div className="flex w-[118px] shrink-0 items-center bg-[#242424] pl-[10px] text-[27px] leading-none text-[#c0c0c0]">年份</div>
        <div className="flex w-[190px] shrink-0 items-center justify-center bg-[#242424] text-[27px] leading-none text-[#c0c0c0]">预测收益</div>
        <div className="flex flex-1 items-center whitespace-nowrap bg-[#242424] pl-[52px] text-[27px] leading-none text-[#c0c0c0]">预测</div>
      </div>
      <div className="flex h-[125px] shrink-0 flex-col pt-[3px]">
        {yearRows.map(([a, b, c]) => (
          <div key={a} className={`flex h-[40px] shrink-0 items-center ${THIN} text-[#c0c0c0]`}>
            <span className="w-[190px] pl-[13px]">{a}</span>
            <span className="w-[183px]">{b}</span>
            <span>{c}</span>
          </div>
        ))}
      </div>
      <div className="flex h-[36px] shrink-0 items-center border-t-[3px] border-[#800000] bg-[#260404] pl-[10px]">
        <span className={HEAD}>所有板块资金排名</span>
      </div>
      <div className="flex h-[41px] shrink-0 gap-[2px] pl-[4px]">
        <div className="flex w-[200px] shrink-0 items-center bg-[#181818]">
          <span className={`-ml-[2px] ${LABEL}`}>名称</span>
        </div>
        <div className="flex flex-1 items-center overflow-hidden bg-[#181818] pl-[44px]">
          <span className={LABEL}>大单净比</span>
          <span className={`${NUM} ${W}`}>%</span>
        </div>
      </div>
      <div className="flex flex-col">
        {sectors.map(([n, v]) => (
          <div key={n} className="flex h-[41.8px] shrink-0 items-center justify-between pr-[2px]">
            <span className="whitespace-nowrap pb-[2px] text-[32px] leading-none text-[#ffff80]">{n}</span>
            <span className={`pt-[3px] ${NUM} ${R}`}>{v}</span>
          </div>
        ))}
      </div>
    </div>
  );
}

export default function App() {
  return (
    <div className="flex h-[1607px] w-[1970px] flex-col overflow-hidden bg-black [font-family:'Noto_Sans_CJK_SC','Liberation_Sans',sans-serif]">
      <Toolbar />
      <div className="flex min-h-0 flex-1">
        <ChartColumn />
        <QuotePanel />
        <RightPanel />
      </div>
    </div>
  );
}
